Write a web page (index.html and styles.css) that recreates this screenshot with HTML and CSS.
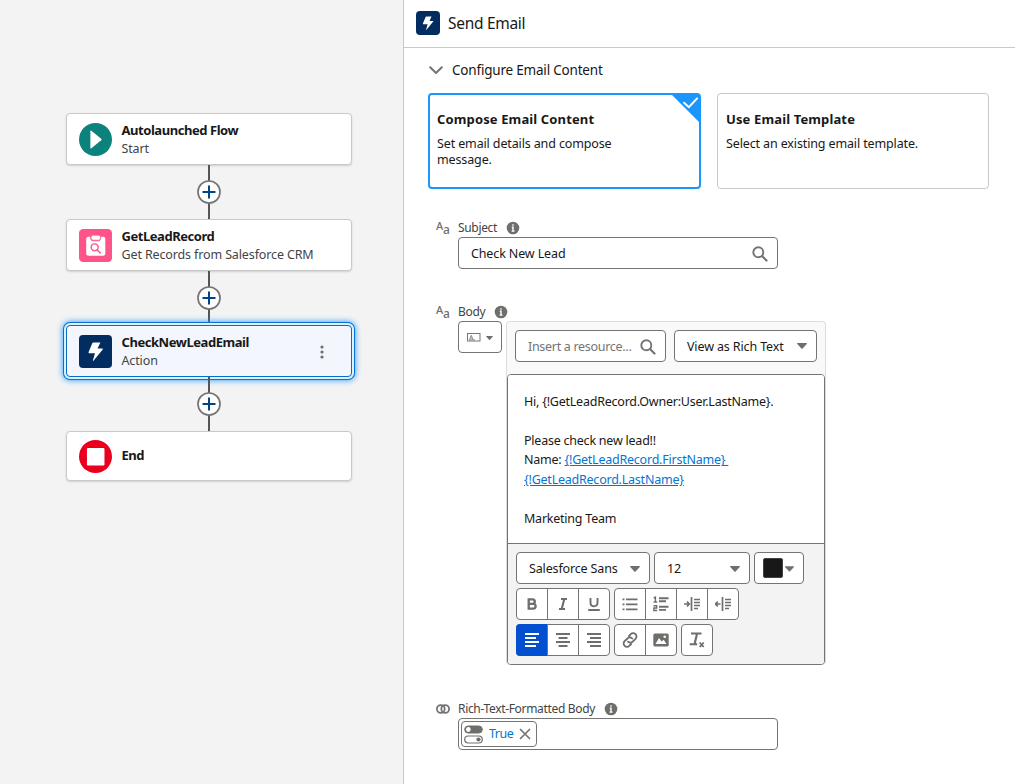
FILE: index.html
```html
<!DOCTYPE html>
<html lang="en">
  <head>
    <meta charset="UTF-8" />
    <meta name="viewport" content="width=device-width, initial-scale=1.0" />
    <title>Flow Builder - Send Email</title>
    <link rel="stylesheet" href="styles.css">
  </head>
  <body>
    <!-- Shared icons -->
    <svg class="sprite" width="0" height="0">
      <symbol id="bolt" viewBox="0 0 32 32">
        <path d="M15.5 7.2h5.2l-2.7 6h4.7q.8.1.3.8l-9 11q-.7.5-.5-.4l2-7H9.700q-.7-.1-.5-.8l3.800-9q.3-.6 1-.6z" fill="#fff" />
      </symbol>
      <symbol id="search" viewBox="0 0 16 16">
        <circle cx="6.300" cy="6.300" r="5" fill="none" stroke="#747474" stroke-width="1.900" />
        <path d="M10 10l4.500 4.500" stroke="#747474" stroke-width="2.200" stroke-linecap="round" />
      </symbol>
      <symbol id="info" viewBox="0 0 14 14">
        <circle cx="7" cy="7" r="6.300" fill="#706e6b" />
        <path d="M7 3.200v1.600M5.800 6.300H7v3.800M5.600 10.100h2.900" fill="none" stroke="#fff" stroke-width="1.400" />
      </symbol>
      <symbol id="down" viewBox="0 0 10 6">
        <path d="M.5 0h9q.8.300.2 1L5.600 5.600q-.6.600-1.200 0L.3 1Q-.2.300.5 0z" fill="#706e6b" />
      </symbol>
      <symbol id="plus" viewBox="0 0 24 24">
        <circle cx="12" cy="12" r="11" fill="#fff" stroke="#747474" stroke-width="1.700" />
        <path d="M12 5.500v13M5.500 12h13" stroke="#014486" stroke-width="2" />
      </symbol>
    </svg>

    <div class="builder">
      <main class="canvas">
        <div class="node">
          <svg class="node-icon" viewBox="0 0 32 32">
            <circle cx="16" cy="16" r="16" fill="#0b827c" />
            <path d="M11 8v16q.2 1 1 .4l9.500-7.700q.8-.7 0-1.400L12 7.600q-.8-.6-1 .4z" fill="#fff" />
          </svg>
          <div class="node-text">
            <h3>Autolaunched Flow</h3>
            <p>Start</p>
          </div>
        </div>
        <div class="connector"><svg><use href="#plus" /></svg></div>
        <div class="node">
          <svg class="node-icon" viewBox="0 0 32 32">
            <rect width="32" height="32" rx="4" fill="#ff538a" />
            <path d="M10.800 7.500H9q-2 0-2 2v14.500q0 2 2 2h14.500q2 0 2-2V9.500q0-2-2-2h-2q0 4.300-3 4.300h-4.700q-3 0-3-4.300z" fill="#fff" />
            <rect x="11.700" y="6" width="9.300" height="4.800" rx="2" fill="#fff" stroke="#ff538a" stroke-width=".6" />
            <circle cx="15.200" cy="17.800" r="3.400" fill="none" stroke="#ff538a" stroke-width="1.400" />
            <path d="M17.700 20.300l3 3" stroke="#ff538a" stroke-width="1.500" stroke-linecap="round" />
          </svg>
          <div class="node-text">
            <h3>GetLeadRecord</h3>
            <p>Get Records from Salesforce CRM</p>
          </div>
        </div>
        <div class="connector"><svg><use href="#plus" /></svg></div>
        <div class="node selected">
          <svg class="node-icon action-icon"><use href="#bolt" /></svg>
          <div class="node-text">
            <h3>CheckNewLeadEmail</h3>
            <p>Action</p>
          </div>
          <svg class="node-menu" viewBox="0 0 4 14">
            <g fill="#706e6b">
              <circle cx="2" cy="2" r="1.600" />
              <circle cx="2" cy="7" r="1.600" />
              <circle cx="2" cy="12" r="1.600" />
            </g>
          </svg>
        </div>
        <div class="connector"><svg><use href="#plus" /></svg></div>
        <div class="node end">
          <svg class="node-icon" viewBox="0 0 32 32">
            <circle cx="16" cy="16" r="16" fill="#ea001e" />
            <rect x="7.700" y="7.700" width="17" height="17" rx="1" fill="#fff" />
          </svg>
          <div class="node-text">
            <h3>End</h3>
          </div>
        </div>
      </main>

      <aside class="panel">
        <header class="panel-header">
          <svg class="action-icon"><use href="#bolt" /></svg>
          <h1>Send Email</h1>
        </header>

        <div class="panel-body">
          <div class="section-title">
            <svg viewBox="0 0 14 9">
              <path d="M1.200 1.200L7 7l5.800-5.800" fill="none" stroke="#747474" stroke-width="2" stroke-linecap="round" stroke-linejoin="round" />
            </svg>
            <h2>Configure Email Content</h2>
          </div>

          <div class="options">
            <div class="option checked">
              <h3>Compose Email Content</h3>
              <p>Set email details and compose message.</p>
              <svg class="corner" viewBox="0 0 30 30">
                <path d="M0 0h30v30z" fill="#1b96ff" />
                <path d="M13.500 9l5 4.600L27 4.500" fill="none" stroke="#fff" stroke-width="2" stroke-linecap="round" />
              </svg>
            </div>
            <div class="option">
              <h3>Use Email Template</h3>
              <p>Select an existing email template.</p>
            </div>
          </div>

          <div class="field subject">
            <div class="label">
              <span class="type">A<small>a</small></span>
              <label>Subject</label>
              <svg class="info"><use href="#info" /></svg>
            </div>
            <div class="input">
              <span>Check New Lead</span>
              <svg class="search"><use href="#search" /></svg>
            </div>
          </div>

          <div class="field body-field">
            <div class="label">
              <span class="type">A<small>a</small></span>
              <label>Body</label>
              <svg class="info"><use href="#info" /></svg>
            </div>
            <div class="body-row">
              <div class="mode">
                <svg class="mode-icon" viewBox="0 0 14 9">
                  <rect x=".5" y=".5" width="12.500" height="7.500" fill="none" stroke="#747474" />
                  <path d="M2.500 6.500L4.200 2.300 6 6.500M3 5h2.500M2 6.800h6" fill="none" stroke="#747474" stroke-width=".8" />
                </svg>
                <svg class="small-down"><use href="#down" /></svg>
              </div>
              <div class="editor-wrap">
                <div class="editor-head">
                  <div class="input resource">
                    <span>Insert a resource...</span>
                    <svg class="search"><use href="#search" /></svg>
                  </div>
                  <div class="input view">
                    <span>View as Rich Text</span>
                    <svg class="down"><use href="#down" /></svg>
                  </div>
                </div>
                <div class="editor">
                  <div class="content">
                    <p>Hi, {!GetLeadRecord.Owner:User.LastName}.</p>
                    <p><br /></p>
                    <p>Please check new lead!!</p>
                    <p>Name: <a>{!GetLeadRecord.FirstName}&nbsp;</a></p>
                    <p><a>{!GetLeadRecord.LastName}</a></p>
                    <p><br /></p>
                    <p>Marketing Team</p>
                  </div>
                  <div class="toolbar">
                    <div class="tools">
                      <div class="input font">
                        <span>Salesforce Sans</span>
                        <svg class="down"><use href="#down" /></svg>
                      </div>
                      <div class="input size">
                        <span>12</span>
                        <svg class="down"><use href="#down" /></svg>
                      </div>
                      <div class="color">
                        <i></i>
                        <svg class="down"><use href="#down" /></svg>
                      </div>
                    </div>
                    <div class="tools">
                      <div class="group">
                        <button>
                          <svg viewBox="0 0 16 16"><path d="M4.700 3.300h4q2.100.1 2.100 2.300T8.700 7.900h-4zM4.700 7.900h4.600q2.300.1 2.300 2.400t-2.300 2.400H4.700z" stroke-width="2.300" /></svg>
                        </button>
                        <button>
                          <svg viewBox="0 0 16 16"><path d="M6 3h6M4 13h6M9.300 3L6.700 13" stroke-width="2.100" /></svg>
                        </button>
                        <button>
                          <svg viewBox="0 0 16 16"><path d="M4.500 2v4.700q0 3.500 3.500 3.500t3.500-3.500V2M2.200 14h11.600" stroke-width="1.900" /></svg>
                        </button>
                      </div>
                      <div class="group">
                        <button>
                          <svg viewBox="0 0 16 16"><path d="M4 3.300h11.500M4 8.300h11.500M4 13.300h11.500M.5 3.300h2M.5 8.300h2M.5 13.300h2" stroke-width="1.800" /></svg>
                        </button>
                        <button>
                          <svg viewBox="0 0 16 16">
                            <path d="M6 2.200h9.500M6 5.300h7M6 10.800h9.500M6 13.900h7" stroke-width="1.900" />
                            <path d="M.8 2l1.600-.8V6M.6 6h3.600M.5 9.800h3.200V12H.9v2.500h3.300" stroke-width="1.400" />
                          </svg>
                        </button>
                        <button>
                          <svg viewBox="0 0 16 16"><path d="M7.500 1v14M10 3.500h6M10 6.500h6M10 9.500h6M10 12.500h4M0 8h5M3 5.500L5.300 8 3 10.500" stroke-width="1.700" /></svg>
                        </button>
                        <button>
                          <svg viewBox="0 0 16 16"><path d="M7.500 1v14M10 3.500h6M10 6.500h6M10 9.500h6M10 12.500h4M.5 8h5M2.800 5.500L.5 8l2.300 2.500" stroke-width="1.700" /></svg>
                        </button>
                      </div>
                    </div>
                    <div class="tools">
                      <div class="group">
                        <button class="active">
                          <svg viewBox="0 0 16 16"><path d="M1 2h14M1 6h11M1 10h14M1 14h11" stroke-width="2" /></svg>
                        </button>
                        <button>
                          <svg viewBox="0 0 16 16"><path d="M1 2h14M3.500 6h9M1 10h14M3.500 14h9" stroke-width="2" /></svg>
                        </button>
                        <button>
                          <svg viewBox="0 0 16 16"><path d="M1 2h14M4 6h11M1 10h14M4 14h11" stroke-width="2" /></svg>
                        </button>
                      </div>
                      <div class="group">
                        <button>
                          <svg viewBox="0 0 16 16"><path d="M7 4l1.800-1.800a3.200 3.200 0 0 1 4.700 4.700l-2.800 2.700a3.200 3.200 0 0 1-4.700 0M9.200 12l-1.900 1.900a3.200 3.200 0 0 1-4.700-4.700l2.900-2.700a3.200 3.200 0 0 1 4.700 0" stroke-width="1.800" stroke-linecap="round" /></svg>
                        </button>
                        <button>
                          <svg viewBox="0 0 16 16">
                            <rect x=".3" y="1.500" width="15.400" height="13" rx="1.600" fill="#706e6b" stroke="none" />
                            <path d="M2.500 12L6 6l2.700 3.500 2-1.800L13.500 12z" fill="#fff" stroke="none" />
                            <circle cx="11.700" cy="4.800" r="1.300" fill="#fff" stroke="none" />
                          </svg>
                        </button>
                      </div>
                      <div class="group">
                        <button>
                          <svg viewBox="0 0 16 16">
                            <path d="M2 1.500h10.500M8 2L5.700 11.500M.7 12.300h7.500" stroke-width="2.100" />
                            <path d="M10.700 10.500l4 4.500M14.700 10.500l-4 4.500" stroke-width="1.800" />
                          </svg>
                        </button>
                      </div>
                    </div>
                  </div>
                </div>
              </div>
            </div>
          </div>

          <div class="field">
            <div class="label">
              <svg class="boolean" viewBox="0 0 14 10">
                <circle cx="4.800" cy="5" r="3.900" />
                <circle cx="9.200" cy="5" r="3.900" />
              </svg>
              <label>Rich-Text-Formatted Body</label>
              <svg class="info"><use href="#info" /></svg>
            </div>
            <div class="input pill-input">
              <div class="pill">
                <svg class="toggles" viewBox="0 0 19 19">
                  <rect x=".7" y="1" width="17.600" height="7" rx="3.500" fill="#706e6b" stroke="#706e6b" />
                  <circle cx="4.300" cy="4.500" r="2.400" fill="#fff" />
                  <rect x=".7" y="11" width="17.600" height="7" rx="3.500" fill="#fff" stroke="#706e6b" stroke-width="1.200" />
                  <circle cx="14.500" cy="14.500" r="2.100" fill="#706e6b" />
                </svg>
                <span>True</span>
                <svg class="close" viewBox="0 0 12 12">
                  <path d="M1.500 1.500l9 9M10.500 1.500l-9 9" stroke="#747474" stroke-width="1.700" stroke-linecap="round" />
                </svg>
              </div>
            </div>
          </div>
        </div>
      </aside>
    </div>
  </body>
</html>
```
FILE: styles.css
```css
* {
  box-sizing: border-box;
}
body {
  margin: 0;
  font-family: "Noto Sans", "Open Sans", sans-serif;
  font-size: 12.5px;
  line-height: 18px;
  letter-spacing: -0.13px;
  color: #181818;
  background-color: #fff;
}
h1, h2, h3, p {
  margin: 0;
}
svg {
  display: block;
  flex-shrink: 0;
}
.sprite {
  position: absolute;
}
.builder {
  display: flex;
  height: 784px;
  overflow: hidden;
}

/* Canvas */
.canvas {
  width: 403px;
  flex-shrink: 0;
  padding: 113px 0 0 66px;
  background-color: #f3f3f3;
}
.node {
  display: flex;
  align-items: center;
  gap: 10px;
  width: 286px;
  height: 52px;
  padding: 0 27px 0 12px;
  background-color: #fff;
  border: 1px solid #c9c9c9;
  border-radius: 4px;
  box-shadow: 0 1px 2px rgba(0, 0, 0, 0.15);
}
.node.end {
  height: 50px;
}
.node.end .node-text {
  padding-top: 0;
  padding-bottom: 1px;
}
.node.selected {
  background-color: #f3f6fc;
  border-color: #0b6cc4;
  box-shadow: 0 0 0 2px #d8f3ff, 0 0 0 3px #0b70d0, 0 0 6px 3px #1b96ff;
}
.node-icon {
  width: 33px;
  height: 33px;
}
.action-icon {
  background-color: #032d60;
  border-radius: 4px;
}
.node-text {
  flex: 1;
  margin-left: -0.5px;
  padding-top: 2px;
}
.node-text h3 {
  font-size: 13px;
  font-weight: 700;
  line-height: 17px;
  letter-spacing: -0.45px;
}
.node-text p {
  line-height: 19px;
  color: #444;
}
.node-menu {
  width: 4px;
  height: 14px;
  margin-top: 2px;
}
.connector {
  display: flex;
  align-items: center;
  justify-content: center;
  width: 286px;
  height: 54px;
  background: linear-gradient(#555, #555) center / 2px 100% no-repeat;
}
.connector svg {
  width: 24px;
  height: 24px;
}

/* Property panel */
.panel {
  flex: 1;
  background-color: #fff;
  border-left: 1px solid #c9c9c9;
}
.panel-header {
  display: flex;
  align-items: center;
  gap: 8px;
  height: 48px;
  padding: 0 12px 1px;
  border-bottom: 1px solid #c9c9c9;
}
.panel-header svg {
  width: 24px;
  height: 24px;
}
.panel-header h1 {
  font-size: 15.500px;
  font-weight: 400;
  letter-spacing: -0.3px;
}
.panel-body {
  padding: 12px 26px 0 24px;
}
.section-title {
  display: flex;
  align-items: center;
  gap: 9px;
  height: 20px;
  padding-left: 1px;
}
.section-title svg {
  width: 14px;
  height: 9px;
  margin-top: 1px;
}
.section-title h2 {
  font-size: 13.500px;
  font-weight: 400;
  letter-spacing: -0.2px;
}
.options {
  display: flex;
  gap: 16px;
  margin-top: 13px;
}
.option {
  position: relative;
  width: 272px;
  height: 96px;
  padding: 16px 60px 0 8px;
  line-height: 16px;
  border: 1px solid #c9c9c9;
  border-radius: 4px;
}
.option h3 {
  margin-bottom: 8px;
  font-size: 13px;
  line-height: 18px;
  letter-spacing: 0.13px;
}
.option.checked {
  width: 273px;
  padding: 15px 59px 0 7px;
  border: 2px solid #1b96ff;
}
.corner {
  position: absolute;
  top: -1px;
  right: -1px;
  width: 29px;
  height: 29px;
}

/* Fields */
.field {
  padding-left: 30px;
}
.subject {
  margin-top: 30px;
}
.body-field {
  margin-top: 34px;
  margin-bottom: 35px;
}
.label {
  display: flex;
  align-items: center;
  height: 18px;
  margin-left: -22px;
  color: #444;
  font-size: 12px;
  letter-spacing: -0.33px;
}
.type {
  width: 22px;
  padding-bottom: 4px;
  color: #706e6b;
  font-size: 11px;
  font-weight: 500;
}
.type small {
  position: relative;
  top: 4px;
  font-size: 12px;
}
.boolean {
  width: 14px;
  height: 10px;
  margin-right: 8px;
  fill: none;
  stroke: #747474;
  stroke-width: 1.800;
}
.info {
  width: 14px;
  height: 14px;
  margin-left: 9px;
}
.input {
  display: flex;
  align-items: center;
  justify-content: space-between;
  width: 320px;
  height: 32px;
  padding: 0 9px 0 12px;
  background-color: #fff;
  border: 1px solid #747474;
  border-radius: 4px;
}
.input > span {
  padding-top: 1px;
}
.search {
  width: 16px;
  height: 16px;
  margin-top: 1px;
}
.down {
  width: 10px;
  height: 6px;
}
.body-row {
  display: flex;
  align-items: flex-start;
  gap: 4px;
}
.mode {
  display: flex;
  align-items: center;
  justify-content: center;
  gap: 5px;
  width: 44px;
  height: 32px;
  padding-top: 1px;
  border: 1px solid #747474;
  border-radius: 4px;
}
.mode-icon {
  width: 14px;
  height: 9px;
}
.small-down {
  width: 7px;
  height: 4px;
}
.editor-wrap {
  width: 320px;
  background-color: #f9f9f9;
  border: 1px solid #ddd;
  border-bottom: 0;
  border-radius: 4px;
}
.editor-head {
  display: flex;
  gap: 8px;
  padding: 8px 8px 12px;
}
.resource {
  width: 151px;
  color: #747474;
  letter-spacing: -0.3px;
}
.view {
  width: 143px;
}
.editor {
  width: 318px;
  border: 1px solid #747474;
  border-radius: 4px;
  overflow: hidden;
}
.content {
  height: 168px;
  padding: 17px 16px 0;
  line-height: 19.450px;
  letter-spacing: -0.23px;
  background-color: #fff;
}
.content a {
  color: #0176d3;
  text-decoration: underline;
}
.toolbar {
  display: flex;
  flex-direction: column;
  gap: 4px;
  height: 121px;
  padding: 8px;
  background-color: #f3f3f3;
  border-top: 1px solid #747474;
}
.tools {
  display: flex;
  gap: 4px;
}
.font {
  width: 134px;
  letter-spacing: -0.15px;
}
.toolbar .input .down {
  margin-top: 2px;
}
.size {
  width: 96px;
}
.color {
  display: flex;
  align-items: center;
  gap: 2px;
  width: 50px;
  height: 32px;
  padding-left: 8px;
  background-color: #fff;
  border: 1px solid #747474;
  border-radius: 4px;
}
.color i {
  width: 20px;
  height: 20px;
  background-color: #181818;
  border: 1px solid #444;
  border-radius: 2px;
}
.color .down {
  width: 9px;
  margin-top: 2px;
}
.group {
  display: flex;
  border: 1px solid #747474;
  border-radius: 4px;
  background-color: #fff;
}
.group button {
  display: flex;
  align-items: center;
  justify-content: center;
  width: 31px;
  height: 30px;
  padding: 0;
  background: none;
  border: 0;
  border-left: 1px solid #747474;
}
.group button:first-child {
  width: 30px;
  border-left: 0;
}
.group button svg {
  width: 16px;
  height: 16px;
  fill: none;
  stroke: #706e6b;
}
.group button.active:first-child {
  width: 31px;
  height: 32px;
  margin: -1px 0 -1px -1px;
  background-color: #0250d0;
  border-radius: 4px 0 0 4px;
}
.group button.active svg {
  stroke: #fff;
}
.pill-input {
  padding: 0 2px;
}
.pill {
  display: flex;
  align-items: center;
  gap: 6px;
  width: 76px;
  height: 26px;
  padding-left: 2px;
  color: #0176d3;
  letter-spacing: -0.5px;
  border: 1px solid #747474;
  border-radius: 4px;
}
.toggles {
  width: 19px;
  height: 19px;
}
.close {
  width: 12px;
  height: 12px;
}
```
